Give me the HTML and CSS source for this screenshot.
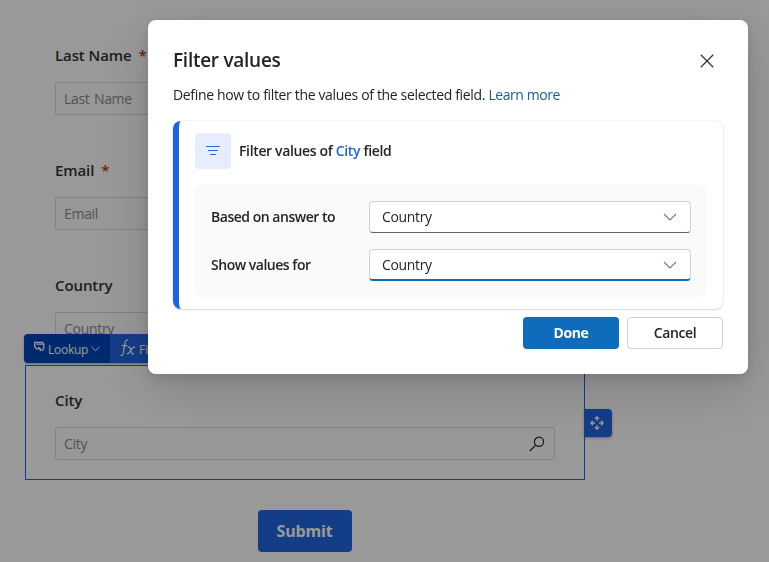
FILE: index.html
```html
<!DOCTYPE html>
<html lang="en">
<head>
<meta charset="utf-8">
<title>Filter values</title>
<link rel="stylesheet" href="styles.css">
</head>
<body>
<main class="form">
  <section class="field"><label class="field-label"><span>Last Name</span><span class="req">*</span></label><div class="input"><span>Last Name</span></div></section>
  <section class="field"><label class="field-label"><span>Email</span><span class="req">*</span></label><div class="input"><span>Email</span></div></section>
  <section class="field"><label class="field-label"><span>Country</span></label><div class="input"><span>Country</span></div></section>
  <section class="field selected">
    <div class="toolbar">
      <div class="tool lookup">
        <svg width="12" height="12" viewBox="0 0 12 12" fill="none" stroke="currentColor" stroke-width="1.3"><path d="M2.8 5.6H1.6V1.4h8.2v1.4M3.2 3.2h7.6v4.6L9 9.4M1.6 5.6l2 2.2h4.6M5.4 6l3 4"/></svg>
        <span>Lookup</span>
        <svg width="9" height="6" viewBox="0 0 9 6" fill="none" stroke="currentColor"><path d="M.6.8l3.9 3.9L8.4.8"/></svg>
      </div>
      <div class="tool filter">
        <svg width="17" height="18" viewBox="0 0 17 18" fill="none" stroke="currentColor" stroke-width="1.2"><path d="M8.2 1.3C6.5.6 5.5 1.4 5.1 3.3L3.2 14.5c-.3 1.6-1.3 2.2-2.7 1.7M2 6.7h5.2M7.7 8.2c1.7-.8 2.4.2 2.8 1.8l.7 3c.5 1.7 1.3 2.4 2.8 1.6M15.2 8.2c-1.5-.4-2.7.6-3.7 2.1l-1.6 2.4c-1 1.5-1.7 2.5-3 1.8"/></svg>
        <span>Filter</span>
      </div>
    </div>
    <label class="field-label"><span>City</span></label>
    <div class="input"><span>City</span>
      <svg class="search" width="16" height="16" viewBox="0 0 16 16" fill="none" stroke="currentColor" stroke-width="1.2"><circle cx="10" cy="5.8" r="4.6"/><path d="M6.7 9.1L.8 15"/></svg>
    </div>
    <div class="mover"><svg width="14" height="14" viewBox="0 0 14 14" fill="none" stroke="currentColor" stroke-width="1.3"><path d="M4.8 2.9L7 .8l2.2 2.1M7 1v4M4.8 11.1L7 13.2l2.2-2.1M7 13V9M2.9 4.8L.8 7l2.1 2.2M1 7h4M11.1 4.8L13.2 7l-2.1 2.2M13 7H9"/></svg></div>
  </section>
  <div class="submit-row"><button class="submit">Submit</button></div>
</main>
<div class="overlay">
  <div class="dialog" role="dialog">
    <header class="dialog-head"><h1>Filter values</h1>
      <svg width="14" height="14" viewBox="0 0 14 14" fill="none" stroke="#333" stroke-width="1.25"><path d="M.8.8l12.4 12.4M13.2.8L.8 13.2"/></svg>
    </header>
    <p class="intro">Define how to filter the values of the selected field. <a>Learn more</a></p>
    <section class="card">
      <div class="card-head">
        <div class="tile"><svg width="14" height="10" viewBox="0 0 14 10" stroke="#2266e3" fill="none" stroke-linecap="round"><path d="M.5.5h13M2.5 4.5h9M4.5 8.5h5"/></svg></div>
        <h2>Filter values of <b>City</b> field</h2>
      </div>
      <div class="panel">
        <div class="row"><span class="row-label">Based on answer to</span><div class="select"><span>Country</span><svg width="14" height="8" viewBox="0 0 14 8" fill="none" stroke="#777" stroke-width="1.1"><path d="M1 1l6 6 6-6"/></svg></div></div>
        <div class="row"><span class="row-label">Show values for</span><div class="select active"><span>Country</span><svg width="14" height="8" viewBox="0 0 14 8" fill="none" stroke="#777" stroke-width="1.1"><path d="M1 1l6 6 6-6"/></svg></div></div>
      </div>
    </section>
    <footer class="actions"><button class="btn primary">Done</button><button class="btn">Cancel</button></footer>
  </div>
</div>
</body>
</html>
```
FILE: styles.css
```css
* { box-sizing: border-box; }
html, body { margin: 0; height: 100%; overflow: hidden; background: #fff; }
body { font-family: "Open Sans", "Noto Sans", sans-serif; font-size: 14px; color: #242424; }
button { font-family: inherit; }
svg { display: block; flex: none; }

.form { width: 560px; margin-left: 25px; padding-top: 20px; }
.field { height: 115px; padding: 24px 30px 20px; }
.field-label { display: flex; height: 22px; line-height: 22px; margin-bottom: 16px; font-size: 15px; font-weight: 600; letter-spacing: -.1px; color: #333; }
.req { margin-left: 7px; color: #c43501; font-weight: 600; }
.input { display: flex; align-items: center; justify-content: space-between; height: 33px; padding: 0 9px 0 8px; border: 1px solid #dadada; border-radius: 2px; background: #fdfdfd; color: #8a8a8a; font-size: 14px; letter-spacing: -.55px; word-spacing: 1px; }
.input { letter-spacing: -.3px; }
.search { color: #222; }

.selected { position: relative; padding: 23px 29px 19px; border: 1px solid #2266e3; background: #fff; }
.toolbar { position: absolute; top: -32px; left: -2px; display: flex; height: 29px; border-radius: 4px; overflow: hidden; color: #fff; font-size: 12px; box-shadow: 0 1px 2px rgba(0, 0, 0, .3); }
.tool { display: flex; align-items: center; padding-top: 1px; }
.lookup { width: 86px; padding-left: 9px; gap: 3px; background: #0045ba; font-weight: 500; letter-spacing: -.25px; }
.lookup svg:first-child { margin-top: -4px; }
.filter { width: 90px; padding-left: 10px; gap: 2px; background: #2266e3; }
.filter svg { margin-top: -2px; }
.mover { position: absolute; left: 558px; top: 43px; display: flex; align-items: center; justify-content: center; width: 28px; height: 28px; padding-right: 2px; padding-bottom: 1px; border-radius: 0 4px 4px 0; background: #2266e3; color: #fff; box-shadow: 0 1px 3px rgba(0, 0, 0, .3); }
.submit-row { display: flex; justify-content: center; padding-top: 30px; }
.submit { width: 94px; height: 42px; padding: 0 1px 0 0; border: 0; border-radius: 4px; background: #2266e3; color: #fff; font-size: 16px; font-weight: 700; letter-spacing: -.2px; }

.overlay { position: fixed; inset: 0; display: flex; justify-content: flex-start; align-items: flex-start; padding: 20px 0 0 148px; background: rgba(0, 0, 0, .4); }
.dialog { width: 600px; height: 354px; padding: 25px; border-radius: 8px; background: #fff; box-shadow: 0 4.8px 14.4px rgba(0, 0, 0, .12), 0 16px 57.6px rgba(0, 0, 0, .16); }
.dialog-head { display: flex; align-items: center; justify-content: space-between; height: 31px; padding-right: 9px; }
h1 { margin: -2px 0 0; font-size: 19px; line-height: 30px; font-weight: 600; letter-spacing: -.27px; }
.intro { margin: 9px 0 0; height: 36px; line-height: 20px; font-size: 14px; white-space: nowrap; letter-spacing: -.34px; }
.intro a { color: #115ea3; letter-spacing: -.42px; }
.card { height: 188px; padding: 12px 16px; border-left: 6px solid #1f61e2; border-radius: 8px; background: #fff; box-shadow: 0 0 2px rgba(0, 0, 0, .12), 0 1px 2px rgba(0, 0, 0, .14); }
.card-head { display: flex; align-items: center; gap: 8px; height: 36px; }
.tile { display: flex; align-items: center; justify-content: center; width: 36px; height: 36px; border-radius: 4px; background: #e6edfd; }
h2 { margin: -1px 0 0; font-size: 14px; font-weight: 600; letter-spacing: -.35px; }
h2 b { font-weight: 600; color: #2266e3; }
.panel { display: flex; flex-direction: column; gap: 16px; height: 112px; margin-top: 16px; padding: 16px; border-radius: 8px; background: #fafafa; }
.row { display: flex; align-items: center; height: 32px; }
.row-label { width: 158px; padding-bottom: 2px; font-weight: 600; letter-spacing: -.48px; }
.select { display: flex; align-items: center; justify-content: space-between; width: 322px; height: 32px; padding: 0 13px 0 12px; border: 1px solid #d1d1d1; border-bottom-color: #616161; border-radius: 4px; background: #fff; letter-spacing: -.35px; }
.select span { padding-bottom: 1px; }
.select.active { border-bottom: 2px solid #0f6cbd; padding-top: 1px; }
.actions { display: flex; justify-content: flex-end; gap: 8px; margin-top: 8px; }
.btn { width: 96px; height: 32px; padding: 0 0 2px; border: 1px solid #d1d1d1; border-radius: 4px; background: #fff; color: #242424; font-size: 14px; font-weight: 600; letter-spacing: -.4px; }
.primary { border: 0; background: #0f6cbd; color: #fff; font-weight: 700; }
```
